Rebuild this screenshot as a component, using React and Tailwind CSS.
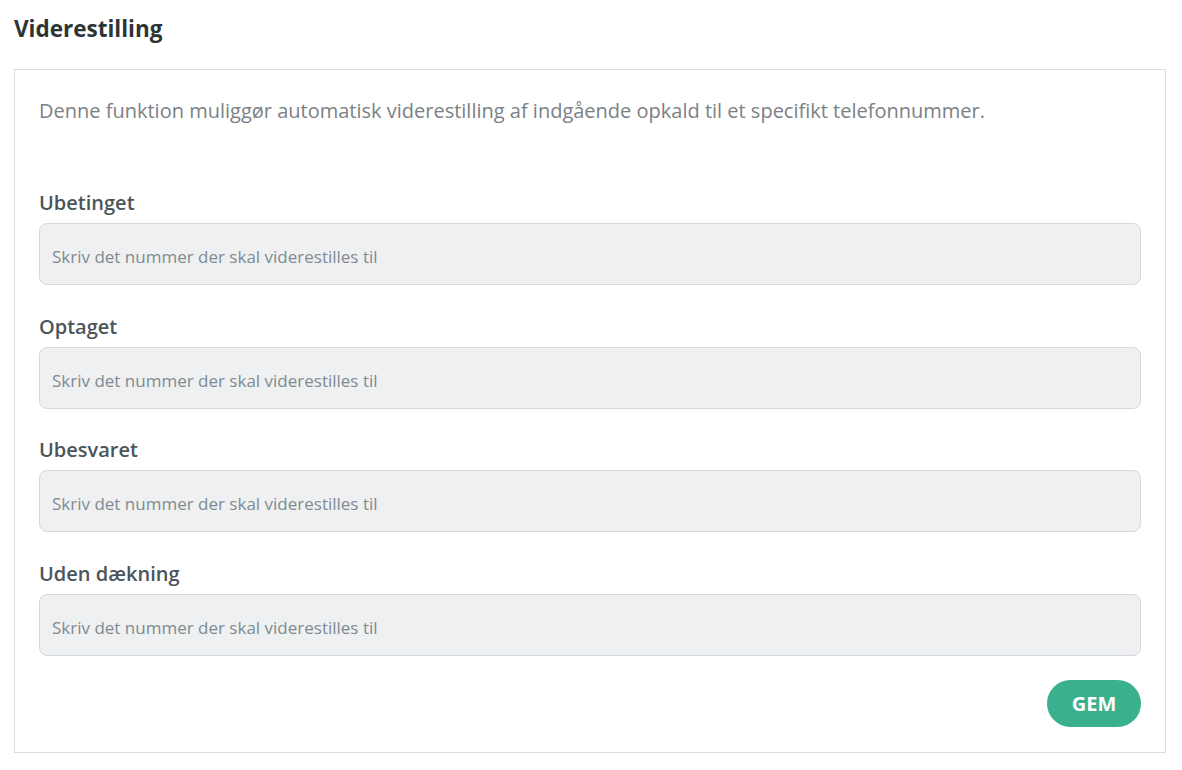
export default function App() {
  const fields = ["Ubetinget", "Optaget", "Ubesvaret", "Uden dækning"];
  return (
    <div className="bg-white min-h-[770px] pl-[14px] pr-[16px] pt-[14px]" style={{ fontFamily: '"Open Sans", "Noto Sans", sans-serif' }}>
      <h1 className="text-[22.5px] leading-[30px] font-bold text-[#2d3436]">Viderestilling</h1>
      <div className="mt-[25px] border border-[#d8dcdf] px-[24px] pt-[27px] pb-[25px]">
        <p className="text-[20px] leading-[28px] text-[#7b8185]">
          Denne funktion muliggør automatisk viderestilling af indgående opkald til et specifikt telefonnummer.
        </p>
        <div className="mt-[64px] flex flex-col gap-[27.7px]">
          {fields.map((f) => (
            <div key={f} className="flex flex-col">
              <label className="text-[20px] leading-[28px] font-semibold text-[#4b555a]">{f}</label>
              <input
                type="text"
                placeholder="Skriv det nummer der skal viderestilles til"
                className="mt-[6px] h-[62px] w-full rounded-[8px] border border-[#d5d8db] bg-[#eef0f2] px-[12px] pt-[5px] text-[17px] text-[#4b555a] placeholder:text-[#7f8b90] outline-none"
              />
            </div>
          ))}
        </div>
        <div className="mt-[24px] flex justify-end">
          <button className="h-[47px] w-[94px] rounded-full bg-[#3bb08f] text-white text-[20px] font-bold">GEM</button>
        </div>
      </div>
    </div>
  );
}
